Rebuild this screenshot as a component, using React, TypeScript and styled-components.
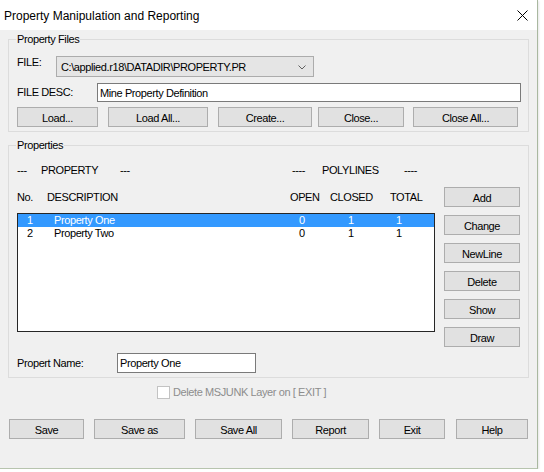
import React from "react";
import styled, { createGlobalStyle } from "styled-components";

const Global = createGlobalStyle`
  html, body { margin: 0; padding: 0; background: #ffffff; }
  body { font-family: "Liberation Sans", Arial, sans-serif; }
  * { box-sizing: border-box; }
`;

const Window = styled.div`
  width: 538px;
  height: 469px;
  background: #f0f0f0;
  border-right: 1px solid #a9b8a0;
  border-bottom: 1px solid #b7c4ae;
  box-shadow: 1px 1px 2px rgba(0, 0, 0, 0.1);
  display: flex;
  flex-direction: column;
  font-family: "Liberation Sans", Arial, sans-serif;
  font-size: 11px;
  letter-spacing: -0.4px;
  color: #000;
`;

const TitleBar = styled.div`
  height: 30px;
  flex: none;
  background: #ffffff;
  display: flex;
  align-items: center;
  justify-content: space-between;
  padding: 0 9px 0 4px;
`;

const Title = styled.span`
  font-size: 12px;
  letter-spacing: 0;
  line-height: 14px;
  padding-top: 2px;
`;

const CloseIcon = styled.svg`
  display: block;
  width: 11px;
  height: 11px;
`;

const Client = styled.div`
  flex: 1;
  display: flex;
  flex-direction: column;
  padding: 3px 8px 0 8px;
`;

const Group = styled.fieldset<{ $top?: number; $pt: number }>`
  margin: ${(p) => p.$top ?? 0}px 0 0 0;
  border: 1px solid #dcdcdc;
  padding: ${(p) => p.$pt}px 7px 4px 8px;
  min-width: 0;
`;

const Legend = styled.legend`
  padding: 0 1px;
  margin-left: -1px;
  line-height: 13px;
  font-size: 11px;
`;

const FieldRow = styled.div<{ $top?: number; $align?: string }>`
  display: flex;
  align-items: ${(p) => p.$align ?? "center"};
  margin-top: ${(p) => p.$top ?? 0}px;
`;

const Label = styled.span<{ $w: number }>`
  width: ${(p) => p.$w}px;
  flex: none;
  line-height: 13px;
  white-space: nowrap;
`;

const Combo = styled.div`
  width: 258px;
  height: 21px;
  background: #e5e5e5;
  border: 1px solid #acacac;
  display: flex;
  align-items: center;
  justify-content: space-between;
  padding: 1px 7px 0 4px;
`;

const Chevron = styled.svg`
  display: block;
  width: 8px;
  height: 5px;
`;

const TextBox = styled.div<{ $w: number; $h: number }>`
  width: ${(p) => p.$w}px;
  height: ${(p) => p.$h}px;
  background: #ffffff;
  border: 1px solid #7a7a7a;
  display: flex;
  align-items: center;
  padding: 0 0 0 2px;
  white-space: nowrap;
`;

const ButtonRow = styled.div<{ $top: number; $left?: number }>`
  display: flex;
  margin-top: ${(p) => p.$top}px;
  margin-left: ${(p) => p.$left ?? 0}px;
`;

const Button = styled.div<{ $w: number; $ml?: number }>`
  width: ${(p) => p.$w}px;
  height: 20px;
  margin-left: ${(p) => p.$ml ?? 0}px;
  background: #e1e1e1;
  border: 1px solid #adadad;
  display: flex;
  align-items: center;
  justify-content: center;
  padding-top: 1px;
  white-space: nowrap;
`;

const PropsArea = styled.div`
  display: grid;
  grid-template-columns: 418px 76px;
  column-gap: 9px;
`;

const LeftCol = styled.div`
  display: flex;
  flex-direction: column;
`;

const CaptionRow = styled.div<{ $top?: number }>`
  display: flex;
  height: 13px;
  line-height: 13px;
  margin-top: ${(p) => p.$top ?? 0}px;
  white-space: nowrap;
`;

const Cell = styled.span<{ $w: number }>`
  width: ${(p) => p.$w}px;
  flex: none;
`;

const ListBox = styled.div`
  margin-top: 9px;
  height: 119px;
  background: #ffffff;
  border: 1px solid #262626;
  display: flex;
  flex-direction: column;
`;

const ListRow = styled.div<{ $sel?: boolean }>`
  display: flex;
  height: 13px;
  line-height: 13px;
  padding-left: 9px;
  background: ${(p) => (p.$sel ? "#3399ff" : "transparent")};
  color: ${(p) => (p.$sel ? "#ffffff" : "#000000")};
  white-space: nowrap;
`;

const SideButtons = styled.div`
  display: flex;
  flex-direction: column;
  gap: 8px;
  padding-top: 23px;
`;

const CheckRow = styled.div`
  display: flex;
  align-items: center;
  margin: 8px 0 0 149px;
  color: #8d8d8d;
  height: 13px;
  line-height: 13px;
`;

const CheckBox = styled.span`
  width: 13px;
  height: 13px;
  flex: none;
  background: #ffffff;
  border: 1px solid #c3c3c3;
  margin-right: 3px;
`;

const rows = [
  { no: "1", desc: "Property One", open: "0", closed: "1", total: "1", sel: true },
  { no: "2", desc: "Property Two", open: "0", closed: "1", total: "1", sel: false },
];

export default function App() {
  return (
    <>
      <Global />
      <Window>
        <TitleBar>
          <Title>Property Manipulation and Reporting</Title>
          <CloseIcon viewBox="0 0 11 11">
            <path d="M0.5 0.5 L10.5 10.5 M10.5 0.5 L0.5 10.5" stroke="#000" strokeWidth="1" fill="none" />
          </CloseIcon>
        </TitleBar>
        <Client>
          <Group $pt={10}>
            <Legend>Property Files</Legend>
            <FieldRow $align="flex-start">
              <Label $w={39}>FILE:</Label>
              <Combo>
                <span>C:\applied.r18\DATADIR\PROPERTY.PR</span>
                <Chevron viewBox="0 0 8 5">
                  <path d="M0.5 0.5 L4 4 L7.5 0.5" stroke="#606060" strokeWidth="1" fill="none" />
                </Chevron>
              </Combo>
            </FieldRow>
            <FieldRow $top={6}>
              <Label $w={80}>FILE DESC:</Label>
              <TextBox $w={424} $h={19}>Mine Property Definition</TextBox>
            </FieldRow>
            <ButtonRow $top={5}>
              <Button $w={81}>Load...</Button>
              <Button $w={100} $ml={10}>Load All...</Button>
              <Button $w={94} $ml={10}>Create...</Button>
              <Button $w={86} $ml={6}>Close...</Button>
              <Button $w={105} $ml={9}>Close All...</Button>
            </ButtonRow>
          </Group>

          <Group $top={7} $pt={12}>
            <Legend>Properties</Legend>
            <PropsArea>
              <LeftCol>
                <CaptionRow>
                  <Cell $w={24}>---</Cell>
                  <Cell $w={79}>PROPERTY</Cell>
                  <Cell $w={172}>---</Cell>
                  <Cell $w={30}>----</Cell>
                  <Cell $w={82}>POLYLINES</Cell>
                  <Cell $w={20}>----</Cell>
                </CaptionRow>
                <CaptionRow $top={14}>
                  <Cell $w={30}>No.</Cell>
                  <Cell $w={243}>DESCRIPTION</Cell>
                  <Cell $w={40}>OPEN</Cell>
                  <Cell $w={60}>CLOSED</Cell>
                  <Cell $w={40}>TOTAL</Cell>
                </CaptionRow>
                <ListBox>
                  {rows.map((r) => (
                    <ListRow key={r.no} $sel={r.sel}>
                      <Cell $w={27}>{r.no}</Cell>
                      <Cell $w={245}>{r.desc}</Cell>
                      <Cell $w={49}>{r.open}</Cell>
                      <Cell $w={48}>{r.closed}</Cell>
                      <Cell $w={20}>{r.total}</Cell>
                    </ListRow>
                  ))}
                </ListBox>
              </LeftCol>
              <SideButtons>
                <Button $w={76}>Add</Button>
                <Button $w={76}>Change</Button>
                <Button $w={76}>NewLine</Button>
                <Button $w={76}>Delete</Button>
                <Button $w={76}>Show</Button>
                <Button $w={76}>Draw</Button>
              </SideButtons>
            </PropsArea>
            <FieldRow $top={6}>
              <Label $w={100}>Propert Name:</Label>
              <TextBox $w={139} $h={20}>Property One</TextBox>
            </FieldRow>
          </Group>

          <CheckRow>
            <CheckBox />
            <span>Delete MSJUNK Layer on [ EXIT ]</span>
          </CheckRow>

          <ButtonRow $top={20} $left={1}>
            <Button $w={75}>Save</Button>
            <Button $w={91} $ml={10}>Save as</Button>
            <Button $w={87} $ml={10}>Save All</Button>
            <Button $w={77} $ml={10}>Report</Button>
            <Button $w={66} $ml={10}>Exit</Button>
            <Button $w={72} $ml={11}>Help</Button>
          </ButtonRow>
        </Client>
      </Window>
    </>
  );
}
